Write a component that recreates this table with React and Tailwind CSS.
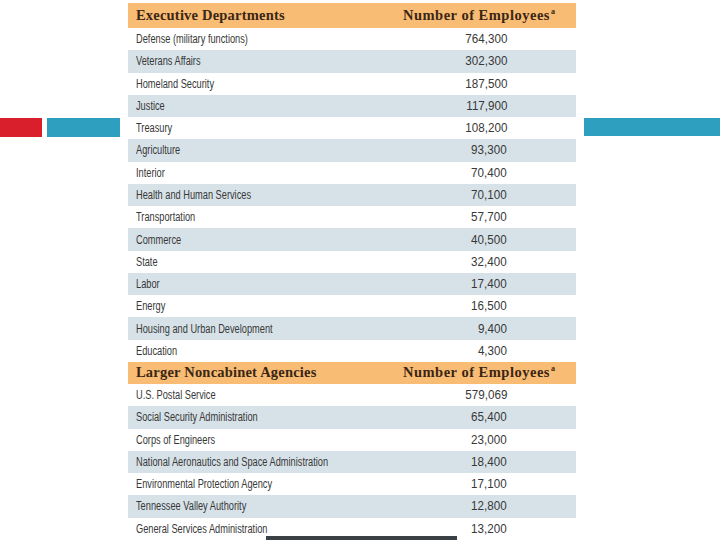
import React from "react";

const exec = [
  ["Defense (military functions)", "764,300"],
  ["Veterans Affairs", "302,300"],
  ["Homeland Security", "187,500"],
  ["Justice", "117,900"],
  ["Treasury", "108,200"],
  ["Agriculture", "93,300"],
  ["Interior", "70,400"],
  ["Health and Human Services", "70,100"],
  ["Transportation", "57,700"],
  ["Commerce", "40,500"],
  ["State", "32,400"],
  ["Labor", "17,400"],
  ["Energy", "16,500"],
  ["Housing and Urban Development", "9,400"],
  ["Education", "4,300"],
];

const agencies = [
  ["U.S. Postal Service", "579,069"],
  ["Social Security Administration", "65,400"],
  ["Corps of Engineers", "23,000"],
  ["National Aeronautics and Space Administration", "18,400"],
  ["Environmental Protection Agency", "17,100"],
  ["Tennessee Valley Authority", "12,800"],
  ["General Services Administration", "13,200"],
];

function Header({ title, h }) {
  return (
    <div
      className={`flex items-center bg-[#f9bc74] text-[#3a2614] ${h} font-['Liberation_Serif',serif] font-bold text-[14.5px] tracking-[0.2px]`}
    >
      <div className="pl-2 flex-1">{title}</div>
      <div className="w-[173px] whitespace-nowrap tracking-[0.5px]">
        Number of Employees
        <span className="text-[8px] relative top-[-6px] ml-[1px]">a</span>
      </div>
    </div>
  );
}

function Row({ name, value, shaded }) {
  return (
    <div
      className={`flex items-center h-[22.27px] ${shaded ? "bg-[#d7e2e8]" : "bg-white"} text-[#383838] text-[12px] font-['Liberation_Sans',Arial,sans-serif]`}
    >
      <div className="pl-2 flex-1 whitespace-nowrap">
        <span className="inline-block origin-left scale-x-[0.77]">{name}</span>
      </div>
      <div className="w-[100px] mr-[69px] text-right whitespace-nowrap">
        <span className="inline-block origin-right scale-x-[0.97]">{value}</span>
      </div>
    </div>
  );
}

export default function App() {
  return (
    <div className="relative w-[720px] h-[540px] overflow-hidden bg-white flex">
      <div className="w-[128px] pt-[118px] flex gap-[5px] items-start">
        <div className="w-[42px] h-[19px] bg-[#d91f2b]" />
        <div className="w-[73px] h-[19px] bg-[#2e9fbe]" />
      </div>
      <div className="w-[448px] pt-[3px] flex flex-col">
        <Header title="Executive Departments" h="h-[25px]" />
        {exec.map(([n, v], i) => (
          <Row key={n} name={n} value={v} shaded={i % 2 === 1} />
        ))}
        <Header title="Larger Noncabinet Agencies" h="h-[22px]" />
        {agencies.map(([n, v], i) => (
          <Row key={n} name={n} value={v} shaded={i % 2 === 1} />
        ))}
      </div>
      <div className="flex-1 pt-[118px] pl-[8px]">
        <div className="h-[18px] bg-[#2e9fbe]" />
      </div>
      <div className="absolute left-[266px] top-[536px] w-[191px] h-[4px] bg-[#3b4045]" />
    </div>
  );
}
